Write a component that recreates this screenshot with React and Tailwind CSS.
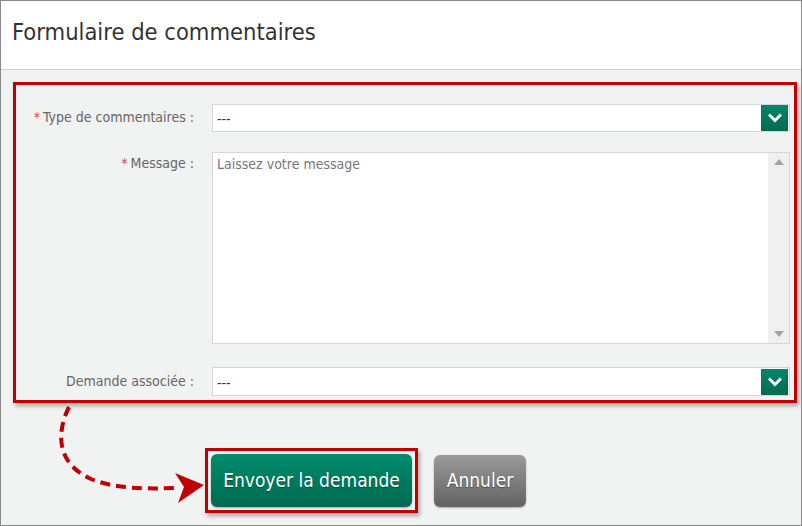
import React from "react";

const font = {
  fontFamily: '"Liberation Sans Narrow", "DejaVu Sans Condensed", "Liberation Sans", sans-serif',
};

function Chevron() {
  return (
    <svg width="14" height="10" viewBox="0 0 14 10">
      <path d="M2 2.5 L7 7.5 L12 2.5" fill="none" stroke="white" strokeWidth="3" strokeLinecap="square" />
    </svg>
  );
}

function Select() {
  return (
    <div className="flex-1 h-full bg-white border border-[#d6d6d6] flex items-center justify-between pl-[4px] pr-px">
      <span className="text-[14px] text-[#333] leading-none pt-[2px]">---</span>
      <div className="w-[27px] h-[26px] bg-gradient-to-b from-[#00876a] to-[#006b50] flex items-center justify-center">
        <Chevron />
      </div>
    </div>
  );
}

function Label({ children, required }) {
  return (
    <div className="w-[178px] mr-[18px] text-right text-[14px] text-[#666] leading-[20px] whitespace-nowrap pb-[2px]">
      {required && <span className="text-[#d9434b] mr-[3px]">*</span>}
      {children}
    </div>
  );
}

export default function App() {
  return (
    <div
      className="relative w-[802px] h-[526px] border border-[#8a8a8a] bg-[#f1f2f2] flex flex-col overflow-hidden"
      style={font}
    >
      <div className="h-[69px] bg-white border-b border-[#cfcfcf] flex items-center pl-[11px]">
        <h1 className="text-[23.5px] text-[#333] leading-none pb-[4px] whitespace-nowrap">Formulaire de commentaires</h1>
      </div>

      <div className="pt-[12px] pl-[12px] pr-[4px]">
        <div className="border-[3px] border-[#c00000] pt-[19px] pb-[4px] pr-[4px] shadow-[2px_3px_4px_rgba(0,0,0,0.3)]">
          <div className="flex items-center h-[28px]">
            <Label required>Type de commentaires :</Label>
            <Select />
          </div>

          <div className="flex items-start h-[192px] mt-[20px]">
            <div className="pt-[1px]">
              <Label required>Message :</Label>
            </div>
            <div className="flex-1 h-full bg-white border border-[#d6d6d6] flex">
              <div className="flex-1 pl-[4px] pt-[1px] text-[14px] text-[#777] leading-[20px]">
                Laissez votre message
              </div>
              <div className="w-[21px] h-full bg-[#f0f0f0] flex flex-col items-center justify-between py-[6px]">
                <svg width="10" height="6" viewBox="0 0 10 6">
                  <path d="M0 6 L5 0 L10 6 Z" fill="#a3a3a3" />
                </svg>
                <svg width="10" height="6" viewBox="0 0 10 6">
                  <path d="M0 0 L10 0 L5 6 Z" fill="#a3a3a3" />
                </svg>
              </div>
            </div>
          </div>

          <div className="flex items-center h-[29px] mt-[23px]">
            <Label>Demande associée :</Label>
            <Select />
          </div>
        </div>

        <div className="flex items-center mt-[45px] ml-[192px]">
          <div className="border-[3px] border-[#c00000] p-[3px] shadow-[2px_3px_4px_rgba(0,0,0,0.3)]">
            <button className="w-[201px] h-[53px] rounded-[6px] bg-gradient-to-b from-[#008c6e] to-[#006a4f] text-white text-[19px] whitespace-nowrap [text-shadow:0_1px_1px_rgba(0,0,0,0.4)] shadow-[0_1px_2px_rgba(0,0,0,0.3)]">
              Envoyer la demande
            </button>
          </div>
          <button className="ml-[16px] w-[92px] h-[52px] rounded-[6px] bg-gradient-to-b from-[#9a9a9a] to-[#636363] text-white text-[19px] whitespace-nowrap [text-shadow:0_1px_1px_rgba(0,0,0,0.4)] shadow-[0_1px_2px_rgba(0,0,0,0.3)]">
            Annuler
          </button>
        </div>
      </div>

      <svg className="absolute left-0 top-0 pointer-events-none" width="802" height="526" viewBox="0 0 802 526">
        <path
          d="M68 406 C 56 430, 54 462, 90 478 C 115 488, 145 488, 176 487"
          fill="none"
          stroke="#c00000"
          strokeWidth="4"
          strokeDasharray="10 6"
        />
        <path d="M174 472 L203 484 L177 502 L183 486 Z" fill="#c00000" />
      </svg>
    </div>
  );
}
